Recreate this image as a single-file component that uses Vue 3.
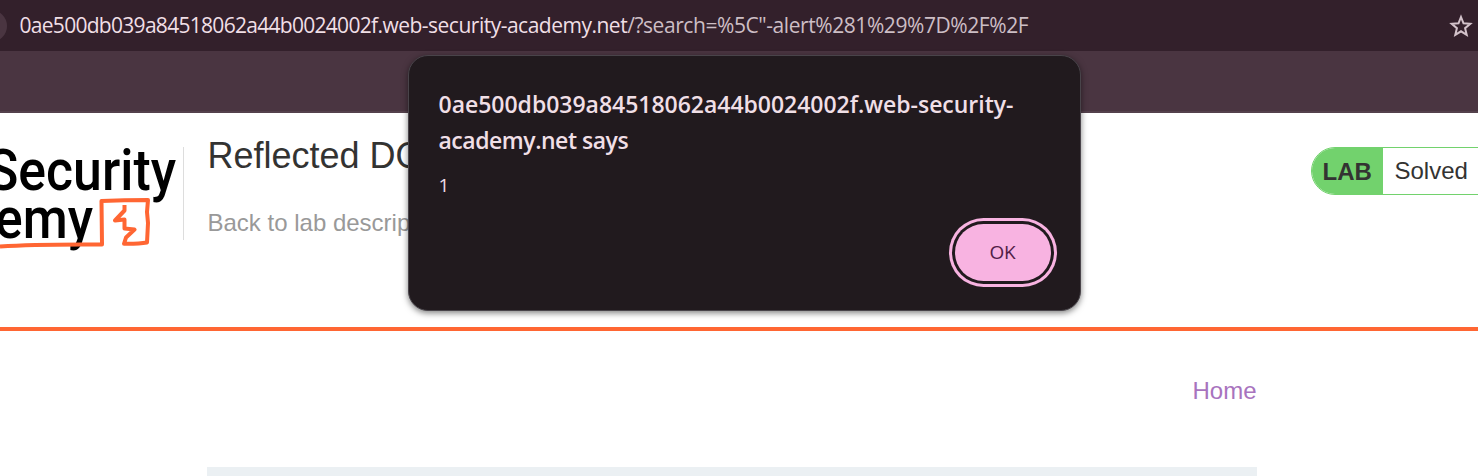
<script setup>
const host = ['0ae500db039a84518062a44b0024002f', '.web-security-academy.net']
const query = '/?search=%5C"-alert%281%29%7D%2F%2F'
</script>

<template>
  <div class="screen">
    <div class="address-bar">
      <span class="site-chip"></span>
      <div class="url"><span class="host-id">{{ host[0] }}</span><span class="host">{{ host[1] }}</span><span class="query">{{ query }}</span></div>
      <svg class="star" width="24" height="24" viewBox="0 0 24 24">
        <path d="M12 3 14.500 9.300 21.300 9.800 16.100 14.200 17.700 20.900 12 17.300 6.300 20.900 7.900 14.200 2.700 9.800 9.500 9.300Z" />
      </svg>
    </div>
    <div class="bookmarks"></div>

    <header class="lab-header">
      <svg class="logo" width="184" height="120" viewBox="0 0 184 120">
        <text x="-13" y="57" textLength="189" lengthAdjust="spacingAndGlyphs">Security</text>
        <text x="-5" y="105" textLength="98" lengthAdjust="spacingAndGlyphs">emy</text>
        <path class="mark" d="M0 113.500Q36 111 102 111.500L101.500 68Q124 67 148 67L147 79L148 90L147 109.500Q139 111 124 110.800L126 104.500L134.500 96.500L124.500 95.500V86.500L115 87.500L124.500 77.500V72" />
      </svg>
      <div class="titles">
        <h2>Reflected DOM XSS</h2>
        <a class="back">Back to lab description</a>
      </div>
      <div class="status"><b>LAB</b><span>Solved</span></div>
    </header>

    <main class="content">
      <nav><a>Home</a></nav>
      <div class="panel"></div>
    </main>

    <div class="dialog">
      <div class="dialog-title"><div class="line-a">0ae500db039a84518062a44b0024002f.web-security-</div><div class="line-b">academy.net says</div></div>
      <div class="message">1</div>
      <button>OK</button>
    </div>
  </div>
</template>

<style>
body { margin: 0; overflow: hidden; }
</style>

<style scoped>
.screen {
  position: relative;
  width: 1478px;
  height: 476px;
  overflow: hidden;
  background: #fff;
  font-family: "Liberation Sans", Arial, sans-serif;
}
.address-bar {
  display: flex;
  align-items: center;
  height: 51px;
  background: #33202b;
}
.site-chip {
  flex: none;
  width: 32px;
  height: 32px;
  margin-left: -25px;
  border-radius: 50%;
  background: #4a3541;
}
.url {
  margin-left: 12.500px;
  padding-bottom: 2px;
  flex: 1;
  white-space: nowrap;
  font: 21px/30px "Open Sans", sans-serif;
}
.host-id { color: #f0dfe6; letter-spacing: -0.71px; }
.host { color: #f0dfe6; letter-spacing: -0.5px; }
.query { color: #cdbec5; letter-spacing: -0.43px; }
.star {
  flex: none;
  margin-right: 5px;
  fill: none;
  stroke: #d3c2ca;
  stroke-width: 2;
}
.bookmarks {
  box-sizing: border-box;
  height: 62px;
  background: #4a3541;
  border-bottom: 2px solid #54414c;
}
.lab-header {
  display: flex;
  box-sizing: border-box;
  height: 218px;
  border-bottom: 4px solid #ff6633;
}
.logo {
  flex: none;
  margin-top: 20px;
  font: 500 57px Roboto, sans-serif;
}
.mark {
  fill: none;
  stroke: #ff6633;
  stroke-width: 4;
  stroke-linejoin: round;
}
.titles {
  flex: 1;
  height: 93px;
  margin-top: 34px;
  margin-left: -1px;
  padding-left: 23.500px;
  border-left: 1px solid #ddd;
}
h2 {
  margin: -12px 0 0;
  font-size: 36px;
  line-height: 42px;
  font-weight: 400;
  color: #333332;
}
.back {
  display: block;
  margin-top: 32px;
  font-size: 24px;
  line-height: 28px;
  color: #999;
}
.status {
  box-sizing: border-box;
  display: flex;
  width: 180px;
  height: 48px;
  margin: 34px -13px 0 0;
  border: 1px solid #72d26d;
  border-radius: 24px 0 0 24px;
  overflow: hidden;
  color: #333332;
  font-size: 24px;
  line-height: 48px;
}
.status b { width: 71px; background: #72d26d; text-indent: 10.500px; }
.status span { margin-left: 11.500px; line-height: 46px; }
.content { width: 1050px; margin-left: 207px; }
nav {
  padding-top: 46px;
  text-align: right;
  font-size: 24px;
  line-height: 28px;
  color: #a873be;
}
nav a { margin-right: 0.5px; }
.panel { height: 9px; margin-top: 62px; background: #ebf0f3; }
.dialog {
  position: absolute;
  left: 408px;
  top: 55px;
  box-sizing: border-box;
  width: 673px;
  height: 256px;
  padding: 30px 26px 0 29.500px;
  border: 1px solid #49444a;
  border-radius: 20px;
  background: #211a1e;
  box-shadow: 0 2px 6px rgba(0, 0, 0, 0.5);
  font-family: "Open Sans", sans-serif;
  color: #f0dfe6;
}
.dialog-title { font-size: 23px; font-weight: 600; line-height: 36px; white-space: nowrap; }
.line-a { letter-spacing: -0.02px; }
.line-b { letter-spacing: -0.47px; }
.message { margin-top: 15px; font-size: 19px; line-height: 24px; }
button {
  display: block;
  width: 96px;
  height: 57px;
  margin: 27px 3px 0 auto;
  padding: 0 1px 1px 0;
  border: 0;
  border-radius: 29px;
  background: #f8b3e1;
  box-shadow: 0 0 0 3px #211a1e, 0 0 0 6px #f8b3e1;
  color: #522046;
  font: 500 19px "Open Sans", sans-serif;
  letter-spacing: -0.2px;
}
</style>
